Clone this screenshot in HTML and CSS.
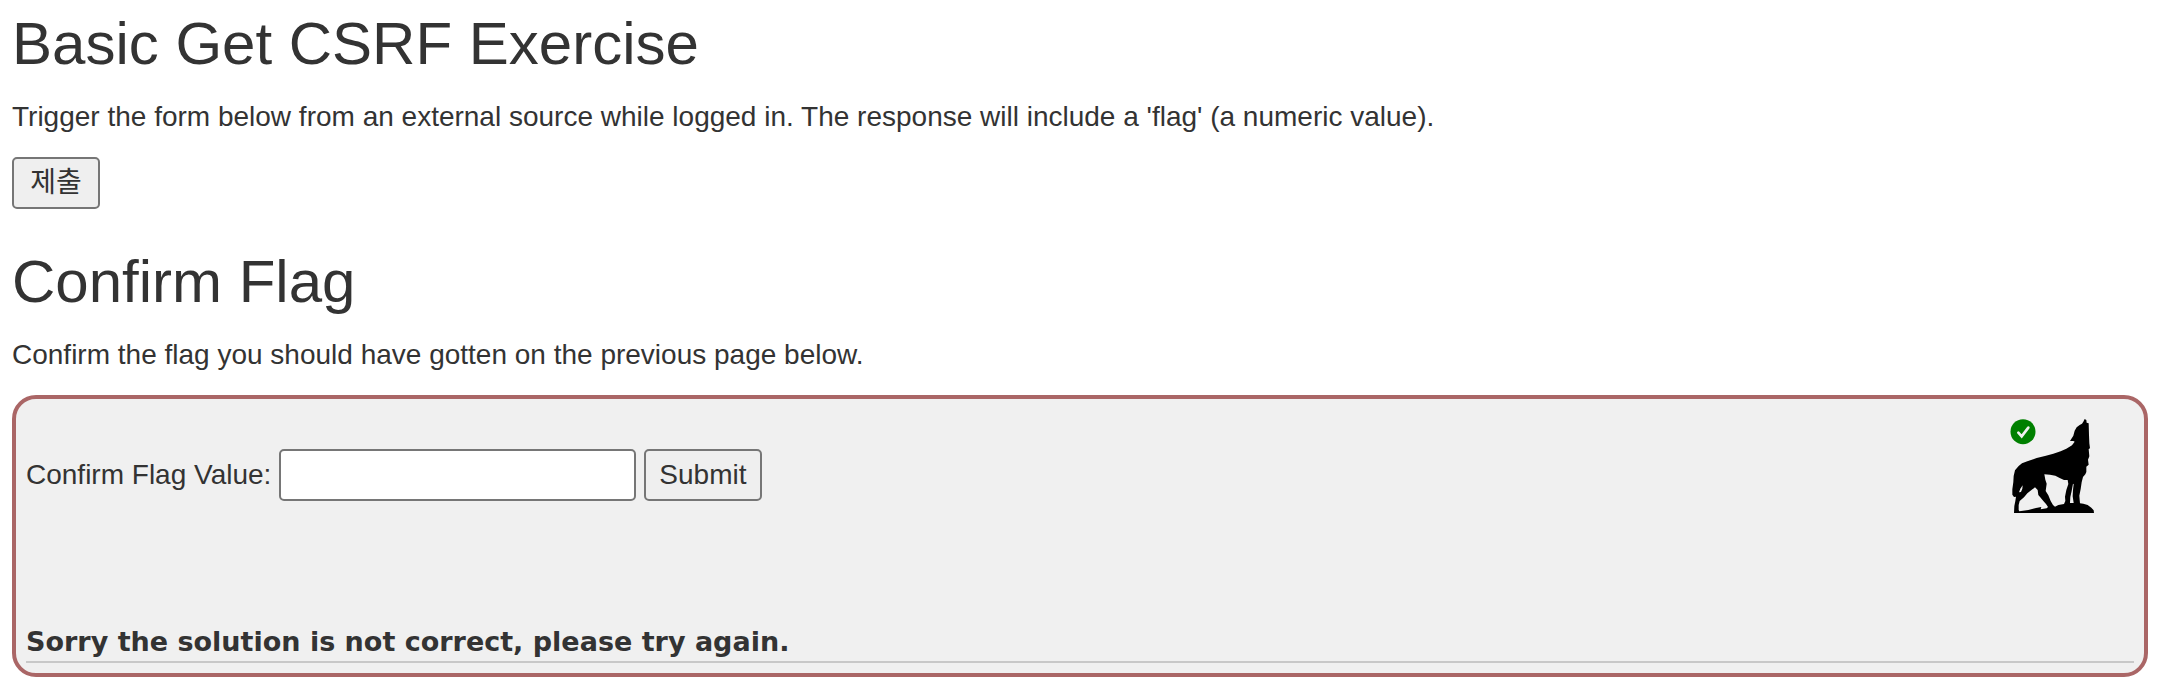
FILE: index.html
```
<!DOCTYPE html>
<html lang="en">
<head>
<meta charset="utf-8">
<title>Basic Get CSRF Exercise</title>
<link rel="stylesheet" href="styles.css">
</head>
<body>
<main class="lesson">
  <section class="exercise">
    <h1 class="title">Basic Get CSRF Exercise</h1>
    <p class="intro">Trigger the form below from an external source while logged in. The response will include a 'flag' (a numeric value).</p>
    <form><button class="button" type="button" lang="ko">제출</button></form>
  </section>
  <section class="exercise">
    <h1 class="title">Confirm Flag</h1>
    <p class="intro">Confirm the flag you should have gotten on the previous page below.</p>
    <div class="attack">
      <div class="attack-top">
        <form class="flag-form">
          <label for="flag">Confirm Flag Value:</label>
          <input class="field" id="flag" type="text">
          <button class="button" type="button">Submit</button>
        </form>
        <svg class="wolf" viewBox="60 51 252 288" role="img" aria-label="Assignment solved">
          <path d="M284 57L280 65L276 71L269 75L260 82L254 92L250 107L240 123L250 123L254 125L246 136L229 146L212 154L190 161L165 168L140 174L112 184L96 190L86 198L75 211L71 228L70 246L67 268L67 284L72 291L78 290L76 303L73 318L72 339L312 339L311 331L304 323L293 315L280 311L270 310L269 299L268 287L272 267L275 247L279 231L286 223L289 216L289 200L296 194L294 179L298 169L296 147L300 145L298 130L297 105L296 70L290 68L289 60ZM163 223L180 224L196 227L209 234L222 240L233 240L235 252L229 270L225 290L226 303L222 312L205 315L195 320L189 315L182 303L175 286L167 273L170 251L166 239ZM135 262L143 270L145 285L152 293L160 303L168 312L174 321L170 325L152 328L154 321L138 324L115 330L88 334L86 330L86 315L89 303L102 292L112 280ZM249 251L251 253L249 270L248 289L251 309L240 309L241 291L245 273ZM98 256L97 266L93 276L87 277L91 266Z" fill="#000" fill-rule="evenodd"/>
          <circle cx="99" cy="95" r="37.500" fill="#008000"/>
          <path d="M85 98L95 109L115 83" fill="none" stroke="#f0f0f0" stroke-width="8" stroke-linecap="round"/>
        </svg>
      </div>
      <div class="feedback" role="status">Sorry the solution is not correct, please try again.</div>
    </div>
  </section>
</main>
</body>
</html>
```
FILE: styles.css
```
* { box-sizing: border-box; }
body {
  margin: 0;
  background: #fff;
  color: #333;
  font: 28px/40px "Liberation Sans", Arial, "Noto Sans CJK KR", sans-serif;
}
.lesson {
  display: flex;
  flex-direction: column;
  gap: 40px;
  padding: 11px 9px 4px 12px;
}
.title {
  margin: 0 0 20px;
  font-size: 60px;
  font-weight: 400;
  line-height: 66px;
}
.intro { margin: 0 0 20px; }
.button, .field {
  height: 52px;
  margin: 0;
  border: 2px solid #767676;
  border-radius: 5px;
  color: inherit;
  font: inherit;
}
.button {
  display: block;
  min-width: 88px;
  padding: 0 13px;
  background: #efefef;
}
.field {
  width: 357px;
  padding: 2px 4px;
  background: #fff;
}
.attack {
  border: 4px solid #a66;
  border-radius: 24px;
  padding: 18px 10px 10px;
  background: #f0f0f0;
}
.attack-top {
  display: flex;
  justify-content: space-between;
  align-items: flex-start;
  padding-right: 40px;
}
.flag-form {
  display: flex;
  align-items: center;
  gap: 8px;
  padding-top: 32px;
}
.wolf { width: 84px; height: 96px; }
.feedback {
  margin-top: 110px;
  border-bottom: 2px solid #c8c8c8;
  font-family: "Arial Black", "DejaVu Sans", sans-serif;
  font-size: 27px;
  font-weight: 900;
  line-height: 38px;
}
```
